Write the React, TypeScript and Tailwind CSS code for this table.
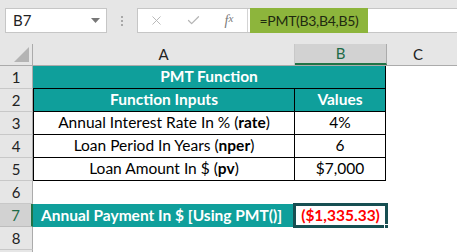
import { X, Check } from 'lucide-react';

const TEAL = 'bg-[#0f9f9b]';

function RowHead({ n, active }: { n: number; active?: boolean }) {
  return (
    <div
      className={`w-[33px] shrink-0 h-full flex items-center justify-center text-[15px] border-b ${
        active
          ? 'bg-[#d2d2d2] text-[#1d6b47] border-[#bdbdbd] border-r-2 border-r-[#217346]'
          : 'bg-[#e6e6e6] text-[#222] border-[#c8c8c8] border-r border-r-[#ababab]'
      }`}
    >
      {n}
    </div>
  );
}

function DataRow({ n, label, bold, value }: { n: number; label: string; bold: string; value: string }) {
  return (
    <div className="flex h-[23px]">
      <RowHead n={n} />
      <div className="w-[262px] shrink-0 border-l border-b border-r border-black flex items-center justify-center text-[15.5px] text-black">
        {label}&nbsp;(<span className="font-bold">{bold}</span>)
      </div>
      <div className="w-[91px] shrink-0 border-b border-r border-black flex items-center justify-center text-[15.5px] text-black">
        {value}
      </div>
      <div className="flex-1" />
    </div>
  );
}

export default function App() {
  return (
    <div className="w-[457px] h-[252px] overflow-hidden bg-white" style={{ fontFamily: 'Lato, "Open Sans", sans-serif' }}>
      {/* Formula bar */}
      <div className="h-[44px] bg-[#e6e6e6] flex items-start pt-[8px] pl-[5px]">
        <div className="w-[102px] h-[25px] bg-white border border-[#c6c6c6] flex items-center justify-between pl-[7px] pr-[6px] text-[15px] text-[#222]">
          <span>B7</span>
          <svg width="9" height="5" viewBox="0 0 9 5">
            <path d="M0 0 L9 0 L4.5 5 Z" fill="#777" />
          </svg>
        </div>
        <div className="w-[30px] h-[25px] flex flex-col items-center justify-center gap-[2px]">
          <span className="w-[2px] h-[2px] bg-[#a8a8a8]" />
          <span className="w-[2px] h-[2px] bg-[#a8a8a8]" />
          <span className="w-[2px] h-[2px] bg-[#a8a8a8]" />
        </div>
        <div className="flex-1 h-[25px] bg-white border border-[#c6c6c6] border-r-0 flex items-center">
          <div className="w-[37px] flex justify-center">
            <X size={15} strokeWidth={1.5} className="text-[#b5b5b5]" />
          </div>
          <div className="w-[36px] flex justify-center">
            <Check size={15} strokeWidth={2} className="text-[#b5b5b5]" />
          </div>
          <div className="w-[36px] flex justify-center text-[14px] italic text-[#7a7a7a]" style={{ fontFamily: '"Liberation Serif", serif' }}>
            f<span className="text-[11px]">x</span>
          </div>
          <div className="w-px h-[23px] bg-[#d4d4d4]" />
          <div className="w-[118px] shrink-0 h-[25px] -my-px bg-[#8db53c] flex items-center justify-center text-[14px] tracking-[-0.3px] text-[#1f2a10] ml-[2px]">
            =PMT(B3,B4,B5)
          </div>
        </div>
      </div>

      {/* Column headers */}
      <div className="flex h-[22px] bg-[#e6e6e6] border-b border-[#ababab] text-[15px] text-[#222]">
        <div className="w-[33px] shrink-0 border-r border-[#ababab] relative">
          <svg className="absolute right-[3px] bottom-[3px]" width="15" height="15" viewBox="0 0 15 15">
            <path d="M15 0 L15 15 L0 15 Z" fill="#b4b4b4" />
          </svg>
        </div>
        <div className="w-[262px] shrink-0 border-r border-[#c8c8c8] flex items-center justify-center">A</div>
        <div className="w-[92px] shrink-0 bg-[#d2d2d2] border-r border-[#ababab] border-b-2 border-b-[#217346] flex items-center justify-center text-[#1d6b47]">
          B
        </div>
        <div className="flex-1 flex items-center justify-center pr-[8px]">C</div>
      </div>

      {/* Row 1 */}
      <div className="flex h-[23px]">
        <RowHead n={1} />
        <div className={`w-[353px] shrink-0 ${TEAL} border-b border-r border-black flex items-center justify-center text-[15.5px] font-bold text-white`}>
          PMT Function
        </div>
        <div className="flex-1" />
      </div>

      {/* Row 2 */}
      <div className="flex h-[23px]">
        <RowHead n={2} />
        <div className={`w-[262px] shrink-0 ${TEAL} border-l border-b border-r border-black flex items-center justify-center text-[15.5px] font-bold text-white`}>
          Function Inputs
        </div>
        <div className={`w-[91px] shrink-0 ${TEAL} border-b border-r border-black flex items-center justify-center text-[15.5px] font-bold text-white`}>
          Values
        </div>
        <div className="flex-1" />
      </div>

      <DataRow n={3} label="Annual Interest Rate In %" bold="rate" value="4%" />
      <DataRow n={4} label="Loan Period In Years" bold="nper" value="6" />
      <DataRow n={5} label="Loan Amount In $" bold="pv" value="$7,000" />

      {/* Row 6 */}
      <div className="flex h-[23px]">
        <RowHead n={6} />
        <div className="flex-1" />
      </div>

      {/* Row 7 */}
      <div className="flex h-[23px]">
        <RowHead n={7} active />
        <div className={`w-[260px] shrink-0 ${TEAL} flex items-center pl-[8px] text-[15.5px] font-bold text-white whitespace-nowrap`}>
          Annual Payment In $ [Using PMT()]
        </div>
        <div className="w-[95px] shrink-0 h-[25px] -mt-px border-[3px] border-[#174f52] bg-white flex items-center justify-center text-[15.5px] font-bold text-[#ff0000] relative">
          ($1,335.33)
          <span className="absolute -right-[4px] -bottom-[4px] w-[5px] h-[5px] bg-[#174f52] border border-white" />
        </div>
        <div className="flex-1" />
      </div>

      {/* Row 8 */}
      <div className="flex h-[23px]">
        <RowHead n={8} />
        <div className="flex-1" />
      </div>
      <div className="flex h-[2px]">
        <div className="w-[33px] bg-[#e6e6e6] border-r border-[#ababab]" />
      </div>
    </div>
  );
}
